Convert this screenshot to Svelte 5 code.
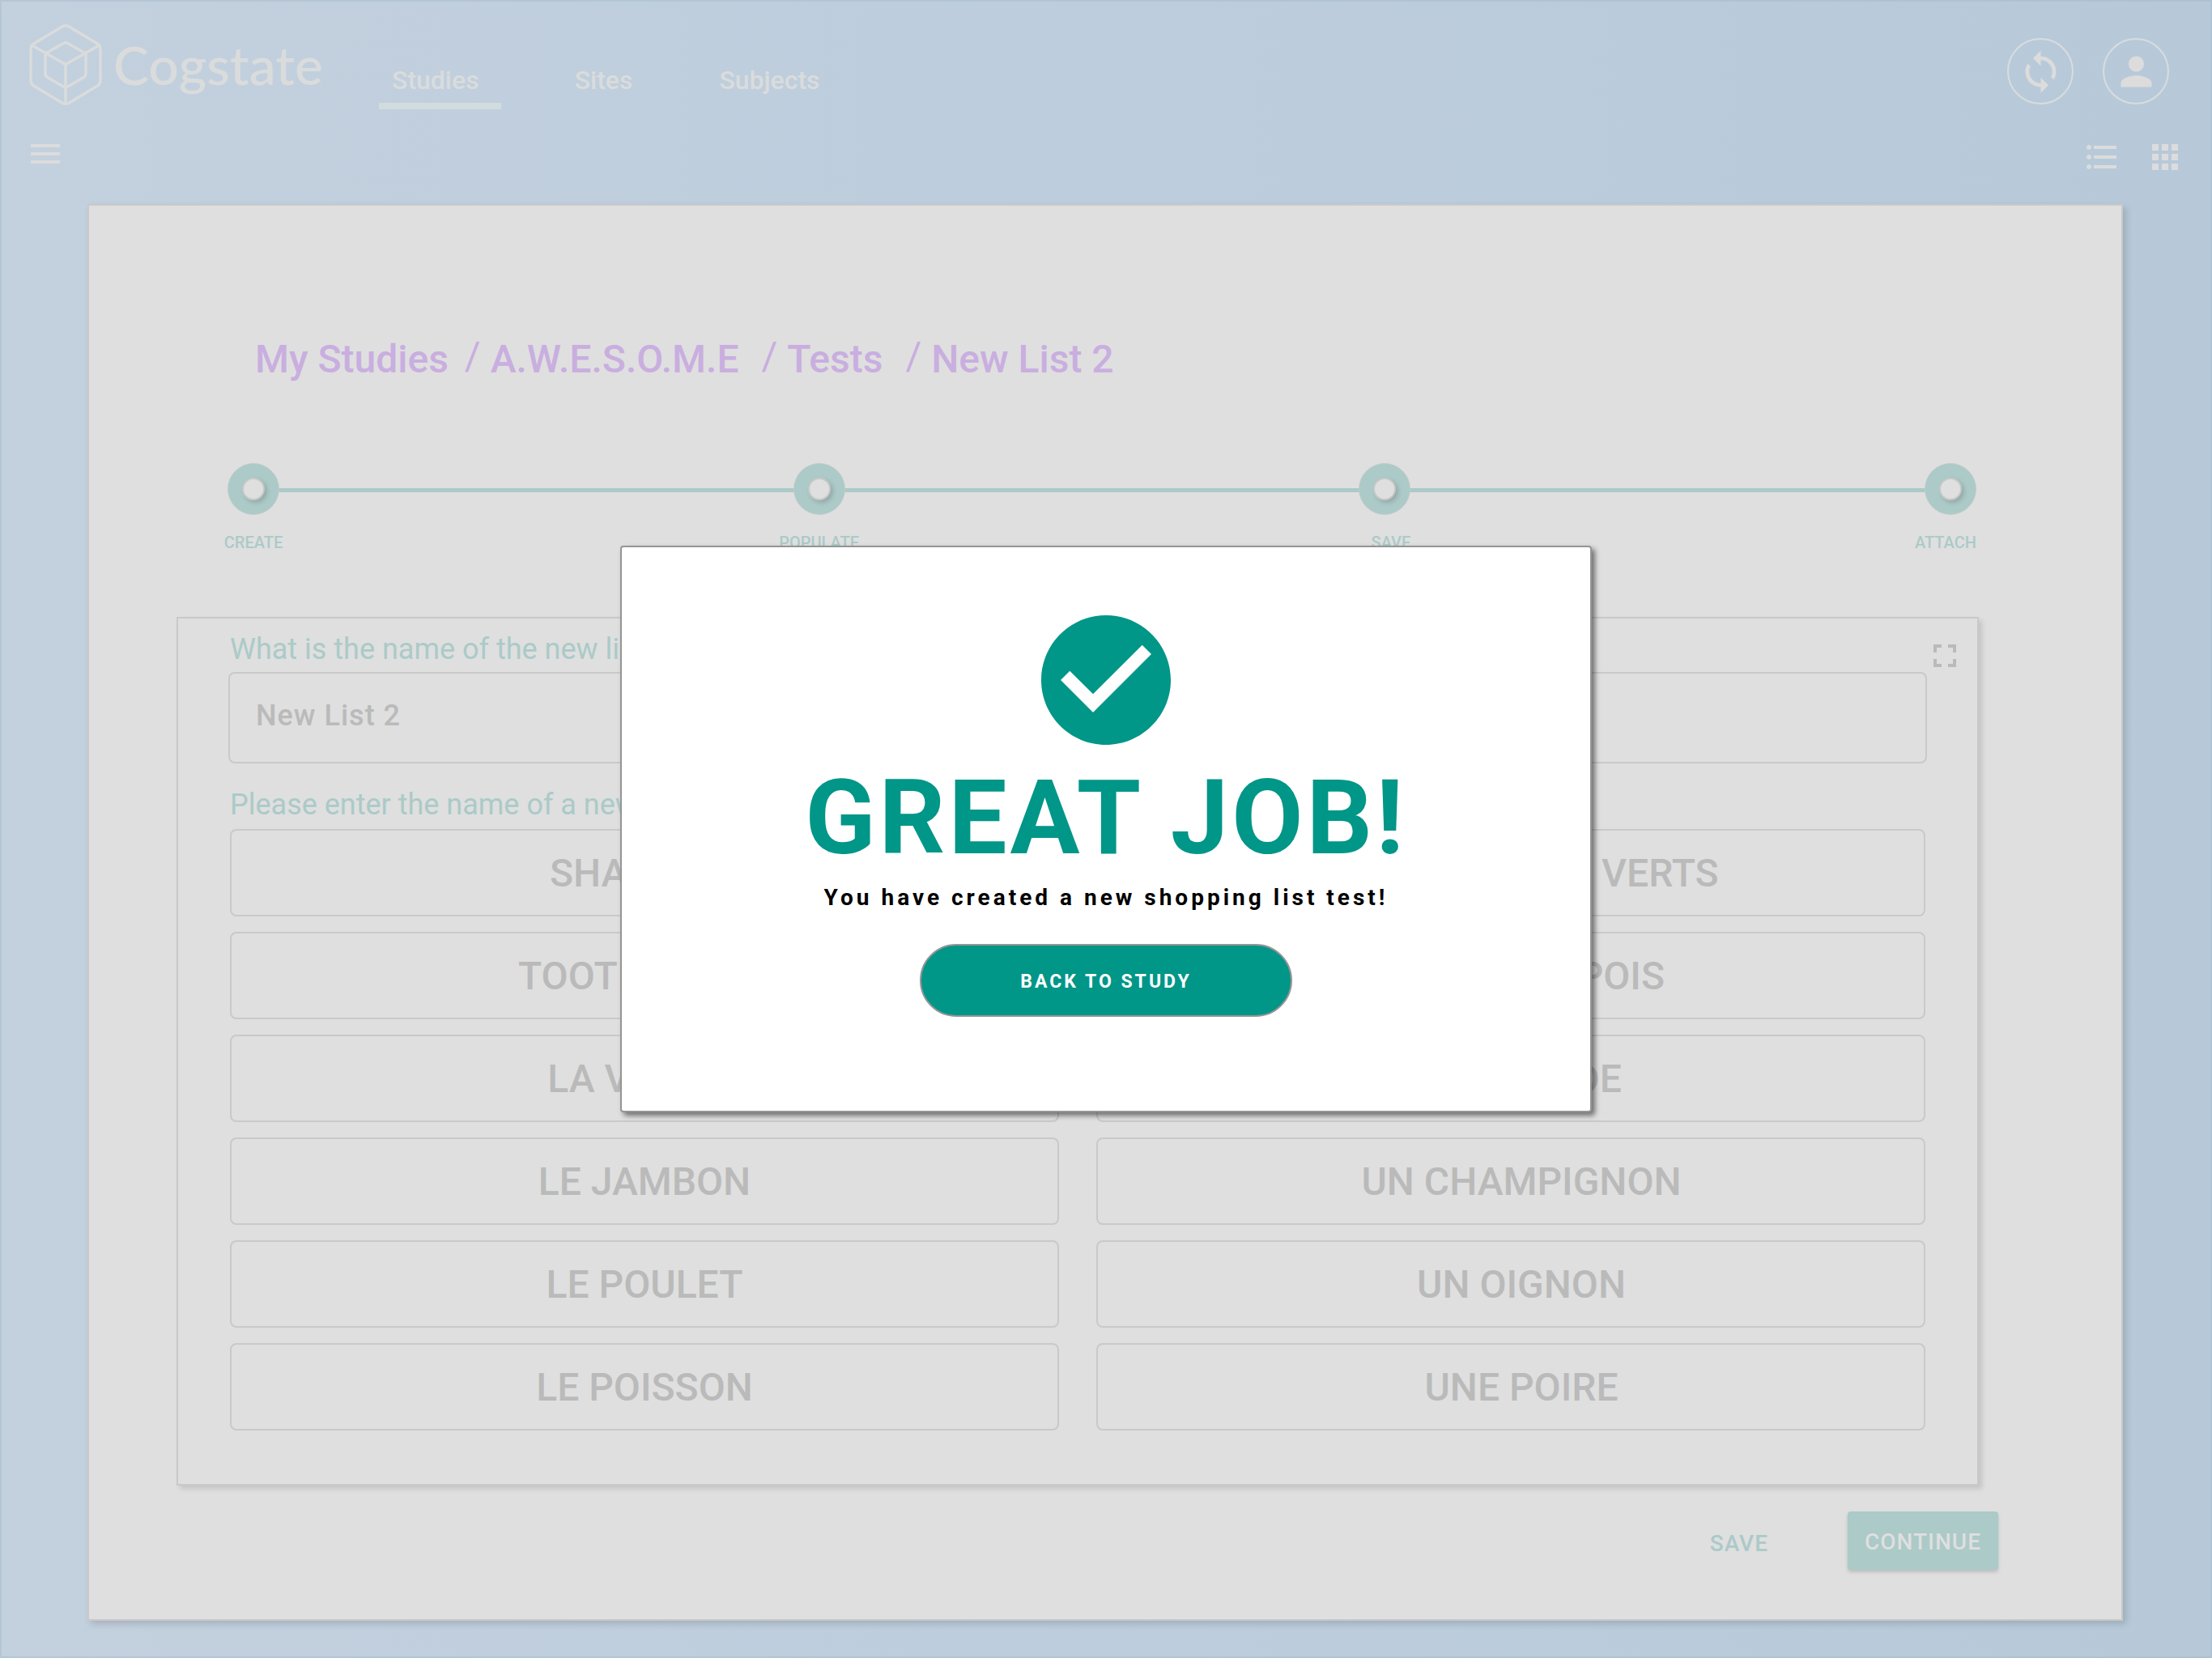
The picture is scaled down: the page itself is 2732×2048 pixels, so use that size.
<script>
  const nav = ['Studies', 'Sites', 'Subjects'];
  const crumbs = ['My Studies', 'A.W.E.S.O.M.E', 'Tests', 'New List 2'];
  const steps = ['CREATE', 'POPULATE', 'SAVE', 'ATTACH'];
  const rows = [
    ['SHAMPOO', 'DES HARICOTS VERTS'],
    ['TOOTHBRUSH', 'UN PETITS POIS'],
    ['LA VIANDE', 'LA SALADE'],
    ['LE JAMBON', 'UN CHAMPIGNON'],
    ['LE POULET', 'UN OIGNON'],
    ['LE POISSON', 'UNE POIRE']
  ];
  let listName = $state('New List 2');
</script>

<div class="app">
  <header>
    <div class="top">
      <a class="logo" href="#home" aria-label="Cogstate">
        <svg width="90" height="100" viewBox="0 0 90 100" fill="none" stroke="currentColor" stroke-width="3.4" stroke-linejoin="round">
          <path d="M41 2.8Q45 .6 49 2.8L84.500 24Q88 26.500 88 31V69Q88 73.500 84.500 76L49 97.200Q45 99.400 41 97.200L5.500 76Q2 73.500 2 69V31Q2 26.500 5.500 24Z" />
          <path d="M43 23.300Q45 21.800 47 23.300L70 36V61Q70 64 67.500 65.500L45 78.500L22.500 65.500Q20 64 20 61V36Z" />
          <path d="M3.500 26L45 49.500L86.500 26M45 49.500V98" />
        </svg>
        <span>Cogstate</span>
      </a>
      <nav>
        {#each nav as item, i}
          <a href="#{item.toLowerCase()}" class:active={i === 0}>{item}</a>
        {/each}
      </nav>
      <div class="actions">
        <button class="round" aria-label="Sync">
          <svg width="57" height="57" viewBox="0 0 24 24"><path d="M12 4V1L8 5l4 4V6c3.310 0 6 2.690 6 6 0 1.010-.25 1.970-.7 2.800l1.460 1.460C19.540 15.030 20 13.570 20 12c0-4.420-3.580-8-8-8zm0 14c-3.310 0-6-2.690-6-6 0-1.010.25-1.970.7-2.800L5.240 7.740C4.460 8.970 4 10.430 4 12c0 4.420 3.580 8 8 8v3l4-4-4-4v3z" /></svg>
        </button>
        <button class="round" aria-label="Account">
          <svg width="57" height="57" viewBox="0 0 24 24"><path d="M12 12c2.210 0 4-1.790 4-4s-1.790-4-4-4-4 1.790-4 4 1.790 4 4 4zm0 2c-2.670 0-8 1.340-8 4v2h16v-2c0-2.660-5.330-4-8-4z" /></svg>
        </button>
      </div>
    </div>
    <div class="tools">
      <button class="icon menu" aria-label="Menu">
        <svg width="48" height="48" viewBox="0 0 24 24"><path d="M3 18h18v-2H3v2zm0-5h18v-2H3v2zm0-7v2h18V6H3z" /></svg>
      </button>
      <button class="icon" aria-label="List view">
        <svg width="48" height="48" viewBox="0 0 24 24"><path d="M4 10.500c-.83 0-1.500.67-1.500 1.500s.67 1.500 1.500 1.500 1.500-.67 1.500-1.500-.67-1.500-1.500-1.500zm0-6c-.83 0-1.500.67-1.500 1.500S3.170 7.500 4 7.500 5.500 6.830 5.500 6 4.830 4.500 4 4.500zm0 12c-.83 0-1.500.67-1.500 1.500s.67 1.500 1.500 1.500 1.500-.67 1.500-1.500-.67-1.500-1.500-1.500zM7 19h14v-2H7v2zm0-6h14v-2H7v2zm0-8v2h14V5H7z" /></svg>
      </button>
      <button class="icon" aria-label="Grid view">
        <svg width="48" height="48" viewBox="0 0 24 24"><path d="M4 8h4V4H4v4zm6 12h4v-4h-4v4zm-6 0h4v-4H4v4zm0-6h4v-4H4v4zm6 0h4v-4h-4v4zm6-10v4h4V4h-4zm-6 4h4V4h-4v4zm6 6h4v-4h-4v4zm0 6h4v-4h-4v4z" /></svg>
      </button>
    </div>
  </header>

  <main>
    <nav class="crumbs" aria-label="Breadcrumb">
      {#each crumbs as crumb, i}
        {#if i > 0}<span class="slash">/</span>{/if}
        <a href="#crumb{i}">{crumb}</a>
      {/each}
    </nav>

    <ol class="steps">
      {#each steps as step, i}
        <li class:end={i > 1}>
          <span class="dot"><span class="hole"></span></span>
          <span class="label">{step}</span>
        </li>
      {/each}
    </ol>

    <section class="panel">
      <div class="question">
        <label for="list-name">What is the name of the new list?</label>
        <button class="icon expand" aria-label="Full screen">
          <svg width="48" height="48" viewBox="0 0 24 24"><path d="M7 14H5v5h5v-2H7v-3zm-2-4h2V7h3V5H5v5zm12 7h-3v2h5v-5h-2v3zM14 5v2h3v3h2V5h-5z" /></svg>
        </button>
      </div>
      <input id="list-name" class="name" type="text" bind:value={listName} />
      <h2>Please enter the name of a new item</h2>
      <div class="items">
        {#each rows as row}
          {#each row as item, side}
            <input class="item" class:right={side === 1} type="text" value={item} aria-label="Item name" />
          {/each}
        {/each}
      </div>
    </section>

    <div class="footer">
      <button class="save">SAVE</button>
      <button class="continue">CONTINUE</button>
    </div>
  </main>

  <div class="overlay">
    <div class="dialog" role="dialog" aria-modal="true" aria-labelledby="dialog-title">
      <svg width="160" height="160" viewBox="2 2 20 20"><path d="M12 2C6.480 2 2 6.480 2 12s4.480 10 10 10 10-4.480 10-10S17.520 2 12 2zm-2 15l-5-5 1.410-1.410L10 14.170l7.590-7.590L19 8l-9 9z" /></svg>
      <h1 id="dialog-title">GREAT JOB!</h1>
      <p>You have created a new shopping list test!</p>
      <button>BACK TO STUDY</button>
    </div>
  </div>
</div>

<style>
  :global(body) {
    margin: 0;
  }

  .app,
  .app :global(*) {
    box-sizing: border-box;
  }

  .app {
    --paper: #dfdfdf;
    --line: #c9c9c9;
    --mist: #dadcdc;
    --pale-teal: #abcac8;
    --grey: #bababa;
    --teal: #009688;
    position: relative;
    display: flex;
    flex-direction: column;
    min-height: 100vh;
    padding-bottom: 44px;
    border: 2px solid rgba(150, 175, 195, 0.3);
    background: linear-gradient(90deg, #c3d0de, #bdcddd 50%, #b7c9d9) border-box;
    font-family: Roboto, 'Liberation Sans', sans-serif;
  }

  button,
  input {
    font-family: inherit;
    margin: 0;
  }

  button {
    padding: 0;
    border: 0;
    background: none;
    cursor: pointer;
  }

  a {
    color: inherit;
    text-decoration: none;
  }

  svg {
    display: block;
    fill: currentColor;
  }

  header {
    color: var(--mist);
  }

  .top {
    display: flex;
    align-items: center;
    height: 164px;
    padding: 0 51px 8px 34px;
  }

  .logo {
    display: flex;
    align-items: center;
    gap: 14px;
    width: 370px;
    font-family: Lato, sans-serif;
    font-size: 66px;
    font-weight: 500;
    line-height: 92px;
  }

  .logo svg {
    fill: none;
  }

  .top nav {
    display: flex;
    gap: 75px;
    margin-left: 62px;
    padding-top: 53px;
    font-size: 32px;
    font-weight: 500;
    line-height: 40px;
  }

  .top nav a {
    padding: 0 16px 8px;
    border-bottom: 8px solid transparent;
  }

  .top nav a.active {
    padding-right: 27px;
    border-image: linear-gradient(#dde0e3, #d2dcde) 1;
    border-image-width: 0 0 8px;
  }

  .actions {
    display: flex;
    gap: 36px;
    margin-left: auto;
    padding-top: 16px;
  }

  .round,
  .icon {
    display: grid;
    place-items: center;
    color: #dcdcdc;
  }

  .round {
    width: 82px;
    height: 82px;
    border: 2px solid var(--mist);
    border-radius: 50%;
  }

  .tools {
    display: flex;
    align-items: flex-end;
    gap: 30px;
    height: 52px;
    padding: 0 32px 0 30px;
  }

  .tools .menu {
    margin-right: auto;
    padding-bottom: 4px;
  }

  main {
    flex: 1;
    display: flex;
    flex-direction: column;
    margin: 34px 108px 0 106px;
    padding: 154px 176px 0 108px;
    border: 2px solid var(--line);
    background: var(--paper);
    box-shadow: 4px 4px 8px rgba(0, 0, 0, 0.15);
  }

  .crumbs {
    display: flex;
    align-items: flex-end;
    padding-left: 97px;
    color: #c9aee0;
    font-size: 48px;
    font-weight: 500;
    line-height: 64px;
  }

  .slash {
    padding: 0 12px 4px 20px;
    font-weight: 400;
  }

  .slash:nth-of-type(n + 2) {
    padding-left: 28px;
  }

  .steps {
    position: relative;
    display: flex;
    justify-content: space-between;
    margin: 96px 3px 0 63px;
    padding: 0;
    list-style: none;
    color: var(--pale-teal);
    font-size: 20px;
    font-weight: 500;
    line-height: 24px;
  }

  .steps::before {
    content: '';
    position: absolute;
    top: 31px;
    left: 32px;
    right: 32px;
    height: 5px;
    background: var(--pale-teal);
  }

  .steps li {
    position: relative;
    display: flex;
    flex-direction: column;
    align-items: center;
    gap: 22px;
    width: 64px;
  }

  .steps li.end {
    align-items: flex-end;
  }

  .label {
    white-space: nowrap;
  }

  .dot {
    display: grid;
    place-items: center;
    width: 64px;
    height: 64px;
    border: 1px solid #c4cccc;
    border-radius: 50%;
    background: var(--pale-teal);
  }

  .hole {
    width: 28px;
    height: 28px;
    border: 2px solid #c6c9c9;
    border-radius: 50%;
    background: #dfdfdf;
    box-shadow: 3px 3px 5px rgba(120, 120, 120, 0.4);
  }

  .panel {
    display: flex;
    flex-direction: column;
    margin-top: 80px;
    padding: 18px 62px 66px;
    border: 2px solid var(--line);
    background: var(--paper);
    box-shadow: 4px 4px 6px rgba(0, 0, 0, 0.12);
  }

  .question {
    display: flex;
    justify-content: space-between;
    height: 48px;
    margin-right: -46px;
  }

  .question label,
  .panel h2 {
    margin: 0;
    padding-left: 2px;
    color: var(--pale-teal);
    font-size: 36px;
    font-weight: 400;
    line-height: 40px;
  }

  .expand {
    padding-top: 4px;
    color: var(--grey);
  }

  .name,
  .item {
    min-width: 0;
    border: 2px solid var(--line);
    border-radius: 8px;
    outline: 0;
    background: transparent;
    color: var(--grey);
    font-weight: 500;
  }

  .name {
    height: 113px;
    padding: 0 32px 6px;
    font-size: 36px;
    letter-spacing: 1px;
  }

  .panel h2 {
    margin-top: 31px;
  }

  .items {
    display: grid;
    grid-template-columns: 1fr 1fr;
    gap: 19px 46px;
    margin: 10px 2px 0;
  }

  .item {
    height: 108px;
    padding: 0;
    font-size: 48px;
    text-align: center;
  }

  .item.right {
    padding-left: 26px;
  }

  .footer {
    display: flex;
    justify-content: flex-end;
    align-items: center;
    gap: 98px;
    margin: 32px -24px 60px 0;
    font-weight: 500;
  }

  .footer button {
    font-size: 28px;
    font-weight: 500;
    letter-spacing: 1px;
  }

  .save {
    padding-top: 6px;
    color: var(--pale-teal);
  }

  .continue {
    width: 186px;
    height: 72px;
    padding-top: 2px;
    border-radius: 4px;
    background: var(--pale-teal);
    color: var(--paper);
    box-shadow: 0 3px 4px rgba(0, 0, 0, 0.15);
  }

  .overlay {
    position: absolute;
    inset: 0;
    display: grid;
    place-items: center;
  }

  .dialog {
    display: flex;
    flex-direction: column;
    align-items: center;
    width: 1200px;
    padding: 84px 0 116px;
    border: 2px solid #959595;
    border-radius: 4px;
    background: #fff;
    box-shadow: 4px 4px 6px rgba(0, 0, 0, 0.5);
    color: var(--teal);
  }

  .dialog h1 {
    margin: 15px 0 0;
    font-size: 128px;
    font-weight: 700;
    line-height: 150px;
    letter-spacing: 4px;
  }

  .dialog p {
    margin: 8px 0 0;
    color: #000;
    font-size: 28px;
    font-weight: 700;
    line-height: 32px;
    letter-spacing: 4px;
  }

  .dialog button {
    width: 460px;
    height: 90px;
    margin-top: 41px;
    padding-top: 2px;
    border: 2px solid #959595;
    border-radius: 45px;
    background: var(--teal);
    color: #fff;
    font-size: 23px;
    font-weight: 700;
    letter-spacing: 3px;
  }
</style>
